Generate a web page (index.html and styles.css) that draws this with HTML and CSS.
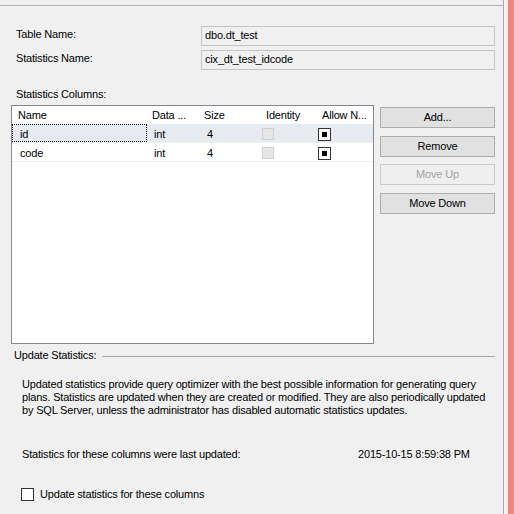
FILE: index.html
```html
<!DOCTYPE html>
<html>
<head>
<meta charset="utf-8">
<link rel="stylesheet" href="styles.css">
</head>
<body>
<div class="window">
  <div class="panel">
    <div class="content">
      <div class="field first">
        <span class="label">Table Name:</span>
        <div class="textbox">dbo.dt_test</div>
      </div>
      <div class="field second">
        <span class="label">Statistics Name:</span>
        <div class="textbox">cix_dt_test_idcode</div>
      </div>
      <div class="section-label">Statistics Columns:</div>
      <div class="columns-area">
        <div class="grid">
          <div class="row header">
            <div class="cell c-name">Name</div>
            <div class="cell c-type">Data ...</div>
            <div class="cell c-size">Size</div>
            <div class="cell c-ident">Identity</div>
            <div class="cell c-null">Allow N...</div>
          </div>
          <div class="row data selected">
            <div class="cell c-name focus">id</div>
            <div class="cell c-type">int</div>
            <div class="cell c-size">4</div>
            <div class="cell c-ident"><span class="chk disabled"></span></div>
            <div class="cell c-null"><span class="chk mixed"></span></div>
          </div>
          <div class="row data">
            <div class="cell c-name">code</div>
            <div class="cell c-type">int</div>
            <div class="cell c-size">4</div>
            <div class="cell c-ident"><span class="chk disabled"></span></div>
            <div class="cell c-null"><span class="chk mixed"></span></div>
          </div>
        </div>
        <div class="buttons">
          <div class="btn">Add...</div>
          <div class="btn">Remove</div>
          <div class="btn disabled">Move Up</div>
          <div class="btn">Move Down</div>
        </div>
      </div>
      <div class="group-head">
        <span class="group-title">Update Statistics:</span>
        <span class="group-line"></span>
      </div>
      <p class="info">Updated statistics provide query optimizer with the best possible information for generating query<br>plans. Statistics are updated when they are created or modified. They are also periodically updated<br>by SQL Server, unless the administrator has disabled automatic statistics updates.</p>
      <div class="last-updated">
        <span class="lu-label">Statistics for these columns were last updated:</span>
        <span class="lu-value">2015-10-15 8:59:38 PM</span>
      </div>
      <div class="update-check">
        <span class="chk plain"></span>
        <span class="uc-label">Update statistics for these columns</span>
      </div>
    </div>
  </div>
  <div class="edge"></div>
</div>
</body>
</html>
```

FILE: styles.css
```css
* { box-sizing: border-box; }
html, body { margin: 0; padding: 0; }
body {
  background: #f0f0f0;
  font-family: "Liberation Sans", Arial, sans-serif;
  font-size: 11px;
  line-height: 13px;
  letter-spacing: -0.18px;
  color: #000;
  width: 514px;
  height: 514px;
  overflow: hidden;
}
.window {
  display: flex;
  height: 514px;
}
.panel {
  width: 504px;
  border-right: 1px solid #a9a9a9;
  height: 514px;
}
.content {
  margin-top: 5px;
  border-top: 1px solid #b4b4b4;
  height: 509px;
  display: flex;
  flex-direction: column;
}
.edge {
  width: 10px;
  height: 514px;
  background: linear-gradient(to right, #fbf3f4 0, #f7e9ea 4px, #e8877e 4px, #e88a80 10px);
}
.field {
  display: grid;
  grid-template-columns: 185px 294px;
  padding-left: 16px;
  align-items: start;
}
.field.first { margin-top: 20px; }
.field.second { margin-top: 4px; }
.field .label { padding-top: 2px; }
.textbox {
  height: 20px;
  border: 1px solid #c4c4c4;
  background: #f0f0f0;
  padding: 2px 3px;
}
.section-label {
  margin-top: 18px;
  padding-left: 16px;
}
.columns-area {
  display: flex;
  margin-top: 4px;
  padding-left: 11px;
  align-items: flex-start;
}
.grid {
  width: 363px;
  height: 239px;
  border: 1px solid #828790;
  background: #fff;
}
.row {
  display: grid;
  grid-template-columns: 135px 52px 62px 56px 56px;
}
.row.header { height: 18px; }
.row.header .cell { padding-top: 3px; }
.row.data {
  height: 19px;
  border-bottom: 1px solid #f0f0f0;
}
.row.selected { background: #e7ebf0; }
.cell { padding-left: 5px; white-space: nowrap; overflow: hidden; }
.row.header .c-name { padding-left: 6px; }
.row.data .cell { padding-top: 4px; padding-left: 7px; }
.row.data .c-name { padding-left: 8px; }
.row.data .c-size { padding-left: 8px; }
.row.data .c-ident, .row.data .c-null { padding-left: 1px; padding-top: 4px; }
.focus { outline: 1px dotted #000; outline-offset: -1px; }
.chk {
  display: inline-block;
  width: 13px;
  height: 13px;
  border: 1px solid #333;
  background: #fff;
  vertical-align: top;
  position: relative;
}
.chk.disabled {
  width: 12px;
  height: 12px;
  border-color: #cfcfcf;
  background: #e6e6e6;
}
.chk.mixed::after {
  content: "";
  position: absolute;
  left: 3px;
  top: 3px;
  width: 5px;
  height: 5px;
  background: #000;
}
.buttons {
  margin-left: 6px;
  margin-top: 2px;
  display: flex;
  flex-direction: column;
  gap: 7.5px;
  width: 115px;
}
.btn {
  height: 21px;
  border: 1px solid #adadad;
  background: #e1e1e1;
  text-align: center;
  padding-top: 3px;
}
.btn.disabled {
  border-color: #cacaca;
  background: #efefef;
  color: #a3a3a3;
}
.group-head {
  display: flex;
  align-items: center;
  margin-top: 5px;
  padding-left: 14px;
  width: 495px;
}
.group-title { white-space: nowrap; }
.group-line {
  flex: 1;
  margin-left: 6px;
  border-top: 1px solid #a8a8a8;
  margin-top: 1px;
}
.info {
  margin: 16px 0 0 0;
  padding-left: 22px;
  white-space: nowrap;
}
.last-updated {
  display: flex;
  margin-top: 31px;
  padding-left: 22px;
}
.lu-label { width: 336px; }
.update-check {
  display: flex;
  align-items: flex-start;
  margin-top: 27px;
  padding-left: 21px;
}
.update-check .chk { margin-top: 0px; }
.uc-label { margin-left: 6px; }
```
